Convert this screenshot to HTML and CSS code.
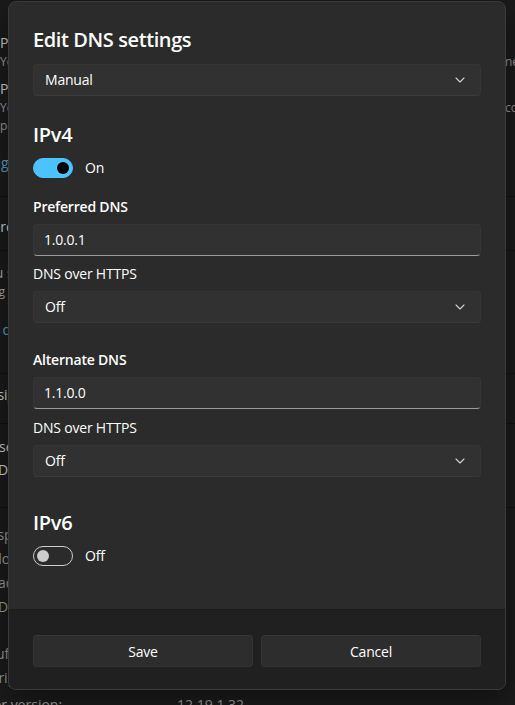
FILE: index.html
```html
<!DOCTYPE html>
<html lang="en">
<head>
    <meta charset="UTF-8">
    <meta name="viewport" content="width=device-width, initial-scale=1.0">
    <title>Edit DNS settings</title>
    <link rel="stylesheet" href="styles.css">
</head>

<body>
    <!-- settings page sitting behind the dialog -->
    <main class="page">
        <section class="card card-profile">
            <p class="opt-title">Public network (Recommended)</p>
            <p class="opt-text split"><span class="lhs">Your device is not discoverable on the network. Use this in most cases</span><span>network at home</span></p>
            <p class="opt-title opt-gap">Private network</p>
            <p class="opt-text split"><span class="lhs">Your device is discoverable on the network. Select this if you need file sharing</span><span>communicate over</span></p>
            <p class="opt-text">people and devices on the network.</p>
            <p class="link link-gap">Configure firewall and security settings</p>
        </section>

        <section class="card card-metered">
            <p class="row-title">Metered connection</p>
        </section>

        <section class="card card-limit">
            <p class="row-text">If you set a data limit, Windows will set the metered connection</p>
            <p class="row-text small">setting for you to help you stay under your limit</p>
            <p class="link limit-link">Set a data limit to help control data usage on this network</p>
        </section>

        <section class="card card-ip">
            <p class="row-title">IP assignment:</p>
        </section>

        <section class="card card-dns">
            <p class="row-title">DNS server assignment:</p>
            <p class="row-title dns-sub">IPv4 DNS servers:</p>
        </section>

        <section class="card card-props">
            <div class="props">
                <p class="prop"><span class="prop-key">Link speed (Receive/Transmit):</span><span class="prop-val">1000/1000 (Mbps)</span></p>
                <p class="prop"><span class="prop-key">Link-local IPv6 address:</span><span class="prop-val">fe80::1</span></p>
                <p class="prop"><span class="prop-key">IPv4 address:</span><span class="prop-val">192.168.1.20</span></p>
                <p class="prop"><span class="prop-key">IPv4 DNS servers:</span><span class="prop-val">1.0.0.1</span></p>
            </div>
            <div class="props">
                <p class="prop"><span class="prop-key">Manufacturer:</span><span class="prop-val">Intel</span></p>
                <p class="prop"><span class="prop-key">Description:</span><span class="prop-val">Ethernet Connection</span></p>
                <p class="prop"><span class="prop-key">Driver version:</span><span class="prop-val">12.19.1.32</span></p>
            </div>
        </section>
    </main>

    <div class="dialog">
        <div class="dialog-body">
            <h1 class="dialog-title">Edit DNS settings</h1>

            <div class="select">
                <span>Manual</span>
                <svg class="chevron" width="10" height="6" viewBox="0 0 10 6"><path d="M1 1 L5 5 L9 1" fill="none" stroke="#d0d0d0" stroke-width="1.1" stroke-linecap="round" stroke-linejoin="round"/></svg>
            </div>

            <section class="ip-block">
                <h2 class="ip-title">IPv4</h2>
                <div class="toggle-row">
                    <span class="toggle on"><span class="knob"></span></span>
                    <span>On</span>
                </div>

                <div class="server">
                    <p class="label strong">Preferred DNS</p>
                    <div class="field">1.0.0.1</div>
                    <p class="label doh">DNS over HTTPS</p>
                    <div class="select">
                        <span>Off</span>
                        <svg class="chevron" width="10" height="6" viewBox="0 0 10 6"><path d="M1 1 L5 5 L9 1" fill="none" stroke="#d0d0d0" stroke-width="1.1" stroke-linecap="round" stroke-linejoin="round"/></svg>
                    </div>
                </div>

                <div class="server">
                    <p class="label strong">Alternate DNS</p>
                    <div class="field">1.1.0.0</div>
                    <p class="label doh">DNS over HTTPS</p>
                    <div class="select">
                        <span>Off</span>
                        <svg class="chevron" width="10" height="6" viewBox="0 0 10 6"><path d="M1 1 L5 5 L9 1" fill="none" stroke="#d0d0d0" stroke-width="1.1" stroke-linecap="round" stroke-linejoin="round"/></svg>
                    </div>
                </div>
            </section>

            <section class="ip-block">
                <h2 class="ip-title">IPv6</h2>
                <div class="toggle-row">
                    <span class="toggle"><span class="knob"></span></span>
                    <span>Off</span>
                </div>
            </section>
        </div>

        <div class="dialog-footer">
            <button class="btn">Save</button>
            <button class="btn">Cancel</button>
        </div>
    </div>
</body>
</html>
```

FILE: styles.css
```css
body {
    font-family: 'Open Sans', 'Noto Sans', sans-serif;
    margin: 0;
    padding: 0;
    background-color: #1b1b1b;
    color: #fff;
    width: 515px;
    height: 705px;
    overflow: hidden;
    position: relative;
}

p {
    margin: 0;
}

/* ---- page behind the dialog ---- */

.page {
    margin-left: -33px;
    width: 548px;
    font-size: 14px;
    color: #cfcfcf;
}

.card {
    border-bottom: 1px solid #121212;
    white-space: nowrap;
    overflow: hidden;
}

.card-profile {
    padding: 33px 0 23px;
}

.opt-title,
.opt-text {
    padding-left: 33px;
}

.opt-title {
    line-height: 20px;
}

.opt-text {
    line-height: 18px;
    font-size: 12px;
    color: #9a9a9a;
}

.opt-gap {
    margin-top: 8px;
}

.split {
    display: flex;
}

.split .lhs {
    width: 505px;
    flex: none;
    overflow: hidden;
}

.link {
    line-height: 20px;
    color: #5c9fc7;
}

.link-gap {
    margin-top: 18px;
}

.card-metered {
    padding: 20px 0 13px;
}

.row-title {
    line-height: 20px;
}

.card-limit {
    padding: 12px 0 33px;
}

.row-text {
    line-height: 20px;
    color: #a8a8a8;
}

.row-text.small {
    line-height: 18px;
    font-size: 12px;
}

.limit-link {
    margin-top: 19px;
}

.card-ip {
    padding: 11px 0 18px;
}

.card-dns {
    padding: 13px 0 27px;
}

.dns-sub {
    margin-top: 3px;
}

.card-props {
    border-bottom: none;
    padding-top: 15px;
    color: #9a9a9a;
}

.props + .props {
    margin-top: 23px;
}

.prop {
    display: flex;
    line-height: 24px;
}

.props + .props .prop:last-child {
    margin-top: 3px;
}

.prop-key {
    width: 210px;
    flex: none;
}

/* ---- dialog ---- */

.dialog {
    position: absolute;
    left: 8px;
    top: 1px;
    width: 498px;
    box-sizing: border-box;
    background-color: #2b2b2b;
    border: 1px solid #3b3b3b;
    border-radius: 8px;
    overflow: hidden;
    box-shadow: 0 8px 32px rgba(0, 0, 0, 0.45);
    font-size: 14px;
    letter-spacing: -0.2px;
}

.dialog-body {
    padding: 24px 24px 43px;
}

.dialog-title {
    margin: 0 0 10px;
    font-size: 20px;
    line-height: 28px;
    font-weight: 600;
    letter-spacing: -0.4px;
}

.select,
.field {
    height: 32px;
    box-sizing: border-box;
    display: flex;
    align-items: center;
    border-radius: 4px;
    background-color: #313131;
    border: 1px solid #363636;
    line-height: 20px;
}

.select {
    justify-content: space-between;
    padding: 0 15px 0 11px;
    border-bottom-color: #3a3a3a;
}

.field {
    padding: 0 10px;
    border-bottom-color: #9c9c9c;
}

.ip-block {
    margin-top: 25px;
}

.ip-block + .ip-block {
    margin-top: 32px;
}

.ip-title {
    margin: 0;
    font-size: 20px;
    line-height: 28px;
    font-weight: 600;
    letter-spacing: -0.3px;
}

.toggle-row {
    margin-top: 9px;
    height: 20px;
    display: flex;
    align-items: center;
    gap: 12px;
    line-height: 20px;
}

.toggle {
    width: 40px;
    height: 20px;
    box-sizing: border-box;
    border-radius: 10px;
    border: 1px solid #cdcdcd;
    display: flex;
    align-items: center;
    padding: 0 3px;
}

.toggle .knob {
    width: 12px;
    height: 12px;
    border-radius: 50%;
    background-color: #cdcdcd;
}

.toggle.on {
    background-color: #4cc2ff;
    border-color: #4cc2ff;
    justify-content: flex-end;
}

.toggle.on .knob {
    background-color: #000;
}

.server {
    margin-top: 19px;
}

.server + .server {
    margin-top: 27px;
}

.label {
    line-height: 20px;
    margin-bottom: 7px;
}

.label.strong {
    font-weight: 600;
}

.label.doh {
    margin-top: 8px;
}

.server + .server .label.doh {
    margin-top: 9px;
}

.dialog-footer {
    background-color: #202020;
    border-top: 1px solid #1c1c1c;
    padding: 25px 24px 22px;
    display: flex;
    gap: 8px;
}

.btn {
    flex: 1;
    height: 32px;
    border-radius: 4px;
    border: 1px solid #333;
    border-top-color: #383838;
    background-color: #2d2d2d;
    color: #fff;
    font-family: inherit;
    font-size: 14px;
    letter-spacing: -0.2px;
}
```
